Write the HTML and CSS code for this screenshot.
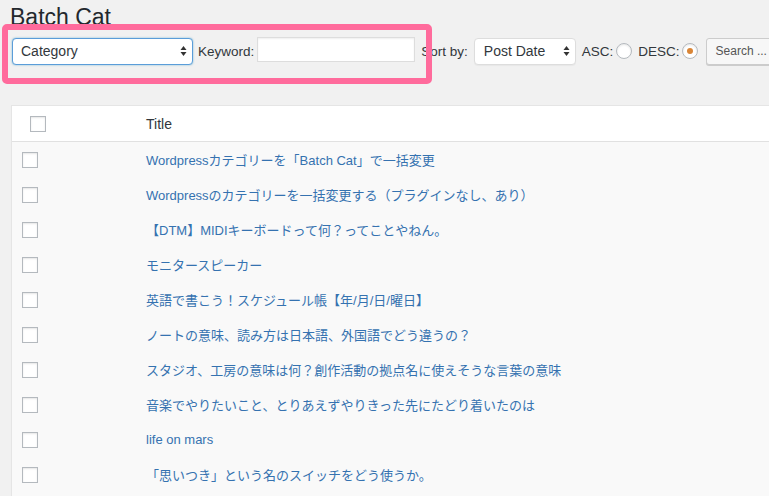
FILE: index.html
```html
<!DOCTYPE html>
<html>
<head>
<meta charset="utf-8">
<link rel="stylesheet" href="styles.css">
</head>
<body>
<div class="wrap">
  <h1 class="page-title">Batch Cat</h1>
  <form class="filters">
    <div class="select select-cat"><span>Category</span><span class="arrows"><svg width="7" height="12" viewBox="0 0 7 12"><path d="M3.5 1 L6.5 5 L0.5 5 Z M3.5 11 L0.5 7 L6.5 7 Z" fill="#333"/></svg></span></div>
    <label class="lbl lbl-kw">Keyword:</label>
    <div class="input-kw"></div>
    <label class="lbl lbl-sort">Sort by:</label>
    <div class="select select-sort"><span>Post Date</span><span class="arrows"><svg width="7" height="12" viewBox="0 0 7 12"><path d="M3.5 1 L6.5 5 L0.5 5 Z M3.5 11 L0.5 7 L6.5 7 Z" fill="#333"/></svg></span></div>
    <label class="lbl lbl-asc">ASC:</label>
    <span class="radio"></span>
    <label class="lbl lbl-desc">DESC:</label>
    <span class="radio checked"></span>
    <div class="btn"><span class="btn-text">Search ...</span></div>
  </form>
  <div class="highlight"></div>

  <div class="table">
    <div class="thead">
      <span class="cb cb-head"></span>
      <span class="th-title">Title</span>
    </div>
    <div class="row"><span class="cb"></span><a class="link">Wordpressカテゴリーを「Batch Cat」で一括変更</a></div>
    <div class="row"><span class="cb"></span><a class="link">Wordpressのカテゴリーを一括変更する（プラグインなし、あり）</a></div>
    <div class="row"><span class="cb"></span><a class="link">【DTM】MIDIキーボードって何？ってことやねん。</a></div>
    <div class="row"><span class="cb"></span><a class="link">モニタースピーカー</a></div>
    <div class="row"><span class="cb"></span><a class="link">英語で書こう！スケジュール帳【年/月/日/曜日】</a></div>
    <div class="row"><span class="cb"></span><a class="link">ノートの意味、読み方は日本語、外国語でどう違うの？</a></div>
    <div class="row"><span class="cb"></span><a class="link">スタジオ、工房の意味は何？創作活動の拠点名に使えそうな言葉の意味</a></div>
    <div class="row"><span class="cb"></span><a class="link">音楽でやりたいこと、とりあえずやりきった先にたどり着いたのは</a></div>
    <div class="row"><span class="cb"></span><a class="link">life on mars</a></div>
    <div class="row"><span class="cb"></span><a class="link">「思いつき」という名のスイッチをどう使うか。</a></div>
  </div>
</div>
</body>
</html>
```
FILE: styles.css
```css
html, body {
  margin: 0;
  padding: 0;
  background: #f1f1f1;
  overflow: hidden;
  width: 769px;
  height: 496px;
}
body {
  font-family: "Liberation Sans", Arial, "Noto Sans CJK JP", sans-serif;
  color: #23282d;
  font-size: 13px;
}
.wrap {
  position: relative;
  padding-top: 1px;
}
.page-title {
  margin: 0;
  padding: 2px 0 0 10px;
  font-size: 23px;
  font-weight: 400;
  line-height: 28px;
  color: #23282d;
}
.filters {
  display: flex;
  align-items: center;
  margin: 6px 0 0 12px;
  height: 28px;
  white-space: nowrap;
}
.filters > * { flex: none; }
.select {
  box-sizing: border-box;
  height: 27px;
  display: flex;
  align-items: center;
  justify-content: space-between;
  background: #fff;
  border-radius: 4px;
  font-size: 14px;
  color: #32373c;
  padding: 0 5px 0 8px;
}
.select-cat {
  width: 181px;
  border: 1px solid #5b9dd9;
  box-shadow: 0 0 2px rgba(30,140,190,.6);
}
.select-sort {
  width: 102px;
  border: 1px solid #ddd;
  box-shadow: 0 1px 1px rgba(0,0,0,.04);
  padding-left: 9px;
}
.arrows { display: flex; align-items: center; }
.lbl { color: #32373c; font-size: 13.5px; }
.lbl-kw { margin-left: 5px; }
.input-kw {
  box-sizing: border-box;
  width: 158px;
  height: 25px;
  margin-left: 3px;
  margin-top: -3px;
  background: #fff;
  border: 1px solid #ddd;
  box-shadow: inset 0 1px 2px rgba(0,0,0,.07);
}
.lbl-sort { margin-left: 6px; margin-right: 6px; }
.lbl-asc { margin-left: 6px; margin-right: 3px; }
.lbl-desc { margin-left: 6px; margin-right: 2px; }
.radio {
  box-sizing: border-box;
  width: 16px;
  height: 16px;
  border-radius: 50%;
  border: 1px solid #b4b9be;
  background: #fff;
  box-shadow: inset 0 1px 2px rgba(0,0,0,.1);
  display: inline-flex;
  align-items: center;
  justify-content: center;
}
.radio.checked::after {
  content: "";
  width: 6px;
  height: 6px;
  border-radius: 50%;
  background: #d98536;
}
.btn {
  box-sizing: border-box;
  margin-left: 8px;
  height: 27px;
  padding: 0 9px;
  width: 90px;
  border: 1px solid #ccc;
  border-radius: 3px;
  background: #f7f7f7;
  box-shadow: 0 1px 0 #ccc;
  display: flex;
  align-items: center;
  color: #555;
}
.btn-text { font-size: 12px; }
.highlight {
  position: absolute;
  left: 2px;
  top: 24px;
  width: 430px;
  height: 60px;
  box-sizing: border-box;
  border: 6px solid #ff6b9c;
  border-radius: 5px;
}
.table {
  margin: 40px 0 0 11px;
  width: 800px;
  padding-bottom: 12px;
  border: 1px solid #e5e5e5;
  background: #f9f9f9;
  box-shadow: 0 1px 1px rgba(0,0,0,.04);
}
.thead {
  height: 35px;
  background: #fff;
  border-bottom: 1px solid #e1e1e1;
  display: flex;
  align-items: center;
}
.cb {
  box-sizing: border-box;
  width: 16px;
  height: 16px;
  border: 1px solid #b4b9be;
  background: #fff;
  box-shadow: inset 0 1px 2px rgba(0,0,0,.1);
  flex: none;
}
.cb-head { margin-left: 18px; }
.th-title {
  margin-left: 100px;
  font-size: 14px;
  color: #32373c;
}
.row {
  height: 35px;
  display: flex;
  align-items: center;
}
.row .cb { margin-left: 10px; }
.link {
  margin-left: 108px;
  color: #3572b0;
  font-size: 13px;
  text-decoration: none;
}
```
